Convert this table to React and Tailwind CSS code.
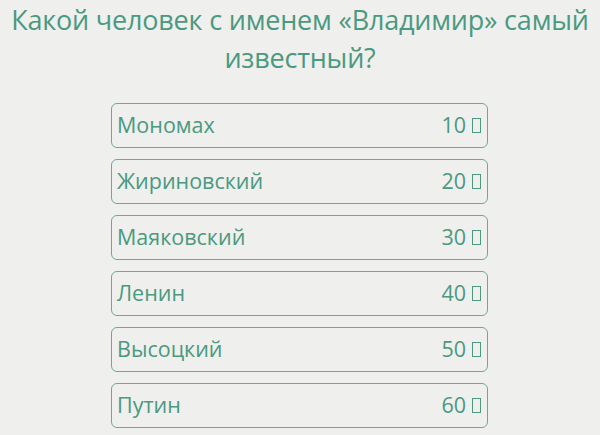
export default function App() {
  const items = [
    ["Мономах", "10"],
    ["Жириновский", "20"],
    ["Маяковский", "30"],
    ["Ленин", "40"],
    ["Высоцкий", "50"],
    ["Путин", "60"],
  ];
  return (
    <div
      className="w-[600px] h-[435px] overflow-hidden bg-[#efefed] text-[#4a9980]"
      style={{ fontFamily: '"Open Sans", "Noto Sans", sans-serif' }}
    >
      <h1 className="text-center text-[27px] leading-[38px] pt-[1px] tracking-[-0.2px]">
        Какой человек с именем «Владимир» самый известный?
      </h1>
      <div className="mt-[26px] flex flex-col gap-[11px] items-center">
        {items.map(([name, n]) => (
          <div
            key={name}
            className="w-[377px] h-[45px] ml-[-1px] rounded-[6px] border-[1.5px] border-[#6aa995] flex items-center justify-between pl-[5px] pr-[6px] text-[21.5px]"
          >
            <span>{name}</span>
            <span className="flex items-center gap-[6px]">
              {n}
              <span className="inline-block w-[9px] h-[15px] border-[1.5px] border-[#4a9980]"></span>
            </span>
          </div>
        ))}
      </div>
    </div>
  );
}
